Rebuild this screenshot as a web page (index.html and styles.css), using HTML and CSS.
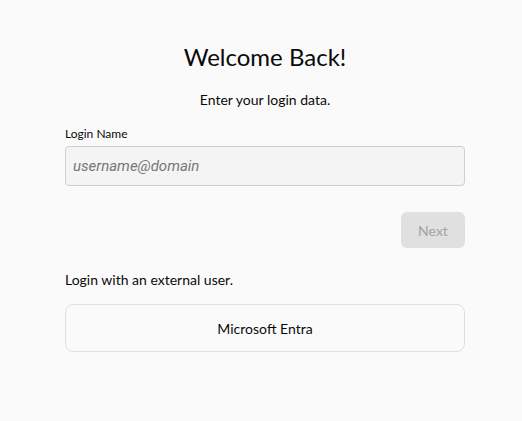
FILE: index.html
```html
<!DOCTYPE html>
<html>
<head>
<meta charset="utf-8">
<link rel="stylesheet" href="styles.css">
</head>
<body>
<main class="card">
  <h1 class="title">Welcome Back!</h1>
  <p class="subtitle">Enter your login data.</p>
  <label class="label" for="login">Login Name</label>
  <input class="input" id="login" type="text" placeholder="username@domain">
  <div class="actions">
    <button class="next" disabled>Next</button>
  </div>
  <p class="external">Login with an external user.</p>
  <button class="idp">Microsoft Entra</button>
</main>
</body>
</html>
```

FILE: styles.css
```css
html, body {
  margin: 0;
  padding: 0;
  background: #fafafa;
}
body {
  padding-left: 8px;
  font-family: Lato, "Noto Sans", sans-serif;
  color: #0a0a0a;
}
.card {
  width: 400px;
  margin: 0 auto;
  padding-top: 42px;
  display: flex;
  flex-direction: column;
}
.title {
  margin: 0;
  font-size: 24px;
  font-weight: 400;
  line-height: 30px;
  text-align: center;
}
.subtitle {
  margin: 19px 0 0;
  font-size: 14px;
  line-height: 18px;
  text-align: center;
}
.label {
  margin-top: 17px;
  font-size: 12px;
  line-height: 16px;
}
.input {
  margin-top: 4px;
  box-sizing: border-box;
  height: 40px;
  width: 100%;
  border: 1px solid #cfcfcf;
  border-radius: 4px;
  background: #f4f4f4;
  padding: 0 7px;
  font-family: Roboto, sans-serif;
  font-size: 15px;
  color: #222;
}
.input::placeholder {
  font-style: italic;
  color: #777;
}
.actions {
  display: flex;
  justify-content: flex-end;
  margin-top: 26px;
}
.next {
  width: 64px;
  height: 36px;
  border: none;
  border-radius: 6px;
  background: #e0e0e0;
  color: #a3a3a3;
  font-family: Lato, sans-serif;
  font-size: 14px;
  padding: 0;
}
.external {
  margin: 23px 0 0;
  font-size: 14px;
  line-height: 18px;
}
.idp {
  margin-top: 15px;
  height: 48px;
  width: 100%;
  box-sizing: border-box;
  border: 1px solid #e0e0e0;
  border-radius: 8px;
  background: #fafafa;
  font-family: Lato, sans-serif;
  font-size: 14px;
  color: #0a0a0a;
}
```
